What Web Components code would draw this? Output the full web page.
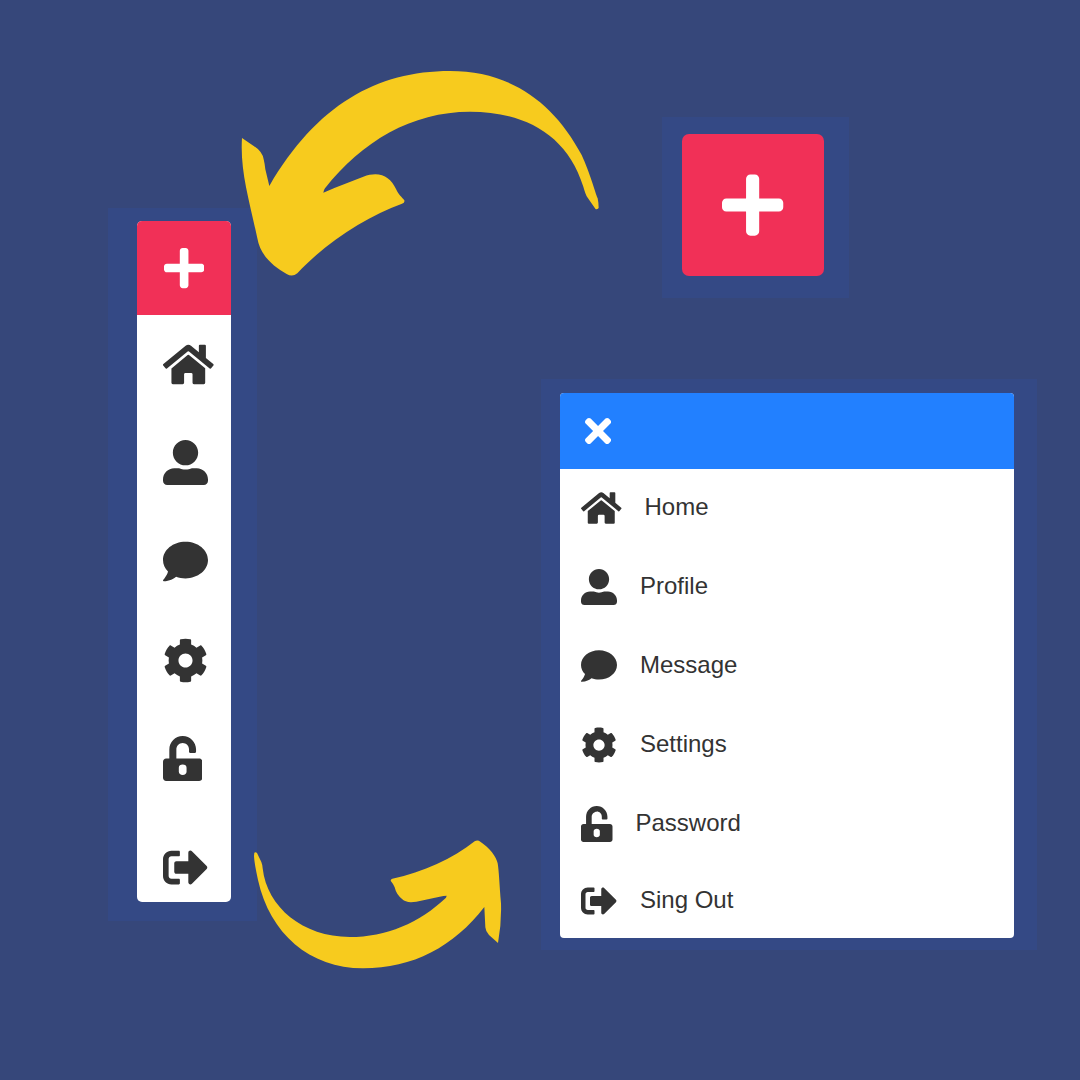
<!DOCTYPE html>
<html lang="en">
<head>
<meta charset="utf-8">
<meta name="viewport" content="width=device-width, initial-scale=1">
<title>Side menu</title>
<style>
  html, body { margin: 0; min-height: 100%; background: #36477a; }
  body { font-family: "Liberation Sans", Arial, sans-serif; color: #333; }
</style>
</head>
<body>
<menu-showcase>
  <menu-panel slot="rail" class="rail">
    <icon-rail></icon-rail>
  </menu-panel>
  <menu-panel slot="toggle" class="toggle">
    <menu-toggle></menu-toggle>
  </menu-panel>
  <menu-panel slot="menu" class="menu">
    <side-menu>
      <menu-item icon="home">Home</menu-item>
      <menu-item icon="user">Profile</menu-item>
      <menu-item icon="comment">Message</menu-item>
      <menu-item icon="cog">Settings</menu-item>
      <menu-item icon="unlock">Password</menu-item>
      <menu-item icon="exit" last>Sing Out</menu-item>
    </side-menu>
  </menu-panel>
</menu-showcase>

<script>
const ICONS = {
  plus: [448, 'M416 208H272V64c0-17.67-14.33-32-32-32h-32c-17.67 0-32 14.33-32 32v144H32c-17.67 0-32 14.33-32 32v32c0 17.67 14.33 32 32 32h144v144c0 17.67 14.33 32 32 32h32c17.67 0 32-14.33 32-32V304h144c17.67 0 32-14.33 32-32v-32c0-17.67-14.33-32-32-32z'],
  times: [352, 'M242.72 256l100.07-100.07c12.28-12.28 12.28-32.19 0-44.48l-22.24-22.24c-12.28-12.28-32.19-12.28-44.48 0L176 189.28 75.93 89.21c-12.28-12.28-32.19-12.28-44.48 0L9.21 111.45c-12.28 12.28-12.28 32.19 0 44.48L109.28 256 9.21 356.07c-12.28 12.28-12.28 32.19 0 44.48l22.24 22.24c12.28 12.28 32.2 12.28 44.48 0L176 322.72l100.07 100.07c12.28 12.28 32.2 12.28 44.48 0l22.24-22.24c12.28-12.28 12.28-32.19 0-44.48L242.72 256z'],
  home: [576, 'M280.37 148.26L96 300.11V464a16 16 0 0 0 16 16l112.06-.29a16 16 0 0 0 15.92-16V368a16 16 0 0 1 16-16h64a16 16 0 0 1 16 16v95.64a16 16 0 0 0 16 16.05L464 480a16 16 0 0 0 16-16V300L295.67 148.26a12.19 12.19 0 0 0-15.3 0zM571.6 251.47L488 182.56V44.05a12 12 0 0 0-12-12h-56a12 12 0 0 0-12 12v72.61L318.47 43a48 48 0 0 0-61 0L4.34 251.47a12 12 0 0 0-1.6 16.9l25.5 31A12 12 0 0 0 45.15 301l235.22-193.74a12.19 12.19 0 0 1 15.3 0L530.9 301a12 12 0 0 0 16.9-1.6l25.5-31a12 12 0 0 0-1.7-16.93z'],
  user: [512, 'M256 288c79.5 0 144-64.5 144-144S335.5 0 256 0 112 64.5 112 144s64.5 144 144 144zm128 32h-55.1c-22.2 10.2-46.9 16-72.9 16s-50.6-5.8-72.9-16H128C57.3 320 0 377.3 0 448v16c0 26.5 21.5 48 48 48h416c26.5 0 48-21.5 48-48v-16c0-70.7-57.3-128-128-128z'],
  comment: [512, 'M256 32C114.6 32 0 125.1 0 240c0 49.6 21.4 95 57 130.7C44.5 421.1 2.7 466 2.2 466.5c-2.2 2.3-2.8 5.7-1.5 8.7S4.8 480 8 480c66.3 0 116-31.8 140.6-51.4 32.7 12.3 69 19.4 107.4 19.4 141.4 0 256-93.1 256-208S397.4 32 256 32z'],
  cog: [512, 'M487.4 315.7l-42.6-24.6c4.3-23.2 4.3-47 0-70.2l42.6-24.6c4.9-2.8 7.1-8.6 5.5-14-11.1-35.6-30-67.8-54.7-94.6-3.8-4.1-10-5.1-14.8-2.3L380.8 110c-17.9-15.4-38.5-27.3-60.8-35.1V25.8c0-5.6-3.9-10.5-9.4-11.7-36.7-8.2-74.3-7.8-109.2 0-5.5 1.2-9.4 6.1-9.4 11.7V75c-22.2 7.9-42.8 19.8-60.8 35.1L88.7 85.5c-4.9-2.8-11-1.9-14.8 2.3-24.7 26.7-43.6 58.9-54.7 94.6-1.7 5.4.6 11.2 5.5 14L67.3 221c-4.3 23.2-4.3 47 0 70.2l-42.6 24.6c-4.9 2.8-7.1 8.6-5.5 14 11.1 35.6 30 67.8 54.7 94.6 3.8 4.1 10 5.1 14.8 2.3l42.6-24.6c17.9 15.4 38.5 27.3 60.8 35.1v49.2c0 5.6 3.9 10.5 9.4 11.7 36.7 8.2 74.3 7.8 109.2 0 5.5-1.2 9.4-6.1 9.4-11.7v-49.2c22.2-7.9 42.8-19.8 60.8-35.1l42.6 24.6c4.9 2.8 11 1.9 14.8-2.3 24.7-26.7 43.6-58.9 54.7-94.6 1.5-5.5-.7-11.3-5.6-14.1zM256 336c-44.1 0-80-35.9-80-80s35.9-80 80-80 80 35.9 80 80-35.9 80-80 80z'],
  unlock: [448, 'M400 256H152V152.9c0-39.6 31.7-72.5 71.3-72.9 40-.4 72.7 32.1 72.7 72v28c0 6.6 5.4 12 12 12h56c6.6 0 12-5.4 12-12v-28C376 68 307.5-.3 223.5 0 139.5.3 72 69.5 72 153.5V256H36c-20 0-36 16-36 36v184c0 20 16 36 36 36h376c20 0 36-16 36-36V292c0-20-16-36-36-36zM268 408c0 22.1-17.9 36-44 36s-44-13.900-44-36v-48c0-22.1 17.900-36 44-36s44 13.900 44 36v48z'],
  exit: [512, 'M497 273L329 441c-15 15-41 4.5-41-17v-96H152c-13.3 0-24-10.7-24-24v-96c0-13.3 10.7-24 24-24h136V88c0-21.4 25.9-32 41-17l168 168c9.3 9.4 9.3 24.6 0 34zM192 436v-40c0-6.6-5.4-12-12-12H96c-17.7 0-32-14.3-32-32V160c0-17.7 14.3-32 32-32h84c6.6 0 12-5.4 12-12V76c0-6.6-5.4-12-12-12H96c-53 0-96 43-96 96v192c0 53 43 96 96 96h84c6.6 0 12-5.4 12-12z']
};

class BaseElement extends HTMLElement {
  constructor() {
    super();
    this.attachShadow({ mode: 'open' });
  }
  connectedCallback() {
    this.shadowRoot.innerHTML = this.render();
  }
}

// Glyph whose height is --icon-size; the width follows its own proportions.
class GlyphIcon extends BaseElement {
  render() {
    const [width, path] = ICONS[this.getAttribute('name')];
    return `
      <style>
        :host { display: inline-flex; flex: none; height: var(--icon-size, 36px); }
        svg { height: 100%; width: auto; aspect-ratio: ${width} / 512; fill: currentColor; display: block; }
      </style>
      <svg viewBox="0 0 ${width} 512" aria-hidden="true"><path d="${path}"/></svg>`;
  }
}

class MenuPanel extends BaseElement {
  render() {
    return `
      <style>:host { display: block; box-sizing: border-box; background: #344985; }</style>
      <slot></slot>`;
  }
}

class MenuToggle extends BaseElement {
  render() {
    return `
      <style>
        :host { display: block; }
        button {
          display: flex; align-items: center; justify-content: center;
          width: 100%; aspect-ratio: 1; padding: 0; border: 0; border-radius: 7px;
          background: #f13057; color: #fff; cursor: pointer; --icon-size: 70px;
        }
      </style>
      <button type="button" aria-label="Open menu"><glyph-icon name="plus"></glyph-icon></button>`;
  }
}

class IconRail extends BaseElement {
  render() {
    const links = [['home', 'Home'], ['user', 'Profile'], ['comment', 'Message'],
                   ['cog', 'Settings'], ['unlock', 'Password'], ['exit', 'Sing Out']];
    return `
      <style>
        :host { display: block; border-radius: 5px; overflow: hidden; background: #fff; --icon-size: 45px; }
        button {
          display: flex; align-items: center; justify-content: center; width: 100%; height: 94px; padding: 0;
          border: 0; background: #f13057; color: #fff; cursor: pointer; --icon-size: 46px;
        }
        nav { display: grid; grid-template-rows: repeat(5, 1fr) 94px; height: 587px; }
        a { display: flex; align-items: center; padding-left: 26px; color: inherit; }
        a:last-child { padding-top: 26px; }
      </style>
      <button type="button" aria-label="Expand menu"><glyph-icon name="plus"></glyph-icon></button>
      <nav>${links.map(([icon, label]) =>
        `<a href="#${icon}" aria-label="${label}"><glyph-icon name="${icon}"></glyph-icon></a>`).join('')}</nav>`;
  }
}

class MenuItem extends BaseElement {
  render() {
    const icon = this.getAttribute('icon');
    return `
      <style>
        :host { display: block; height: 77px; padding-bottom: 2px; }
        :host([last]) { height: 74px; padding-bottom: 0; }
        a {
          display: flex; align-items: center; gap: 23px; height: 100%; padding-left: 21px;
          color: inherit; text-decoration: none; font-size: 24px; line-height: 32px;
        }
        span { padding-bottom: 2px; }
      </style>
      <a href="#${icon}"><glyph-icon name="${icon}"></glyph-icon><span><slot></slot></span></a>`;
  }
}

class SideMenu extends BaseElement {
  render() {
    return `
      <style>
        :host { display: block; border-radius: 4px; overflow: hidden; background: #fff; }
        header { display: flex; align-items: center; height: 76px; padding-left: 25px; background: #2280ff; }
        button { display: flex; padding: 0; border: 0; background: none; color: #fff; cursor: pointer; --icon-size: 38px; }
      </style>
      <header><button type="button" aria-label="Close menu"><glyph-icon name="times"></glyph-icon></button></header>
      <nav><slot></slot></nav>`;
  }
}

class BrushArrow extends BaseElement {
  render() {
    const back = this.getAttribute('kind') === 'back';
    return `
      <style>
        :host { display: block; }
        svg { display: block; width: 100%; fill: #f7cb1e; }
      </style>
      ${back
        ? `<svg viewBox="60 60 1080 621" aria-hidden="true"><path d="M66 264L100 287Q127 304 131 328Q134 340 136 358L148 408C290 165 470 63 690 63C870 63 1000 155 1085 315C1110 370 1125 425 1133 445Q1136 460 1136 474Q1130 480 1126 476L1102 442Q1096 432 1090 410C1040 250 910 185 750 185C575 185 425 275 315 415Q310 422 310 428L345 413L430 380C480 362 510 380 528 417C537 436 545 440 553 451Q555 458 546 461C440 500 320 575 232 670Q217 682 200 672C160 650 120 615 112 565C85 440 60 360 66 264Z"/></svg>`
        : `<svg viewBox="40 60 750 387" aria-hidden="true"><path d="M44 98Q48 95 52 99L65 126Q68 133 69 145C82 262 190 351 330 351C440 351 540 308 619 233L621 227Q612 227 600 230L530 245Q500 250 488 238Q470 224 465 202Q460 190 453 182Q453 177 458 176C550 158 640 115 705 64Q714 59 722 65C750 83 770 110 774 130C778 155 779 190 784 250Q786 310 775 369L748 345Q738 335 737 322L734 261C642 380 520 445 370 445C210 445 90 340 55 180Q44 130 43 108Z"/></svg>`}`;
  }
}

class MenuShowcase extends BaseElement {
  render() {
    return `
      <style>
        :host { display: block; position: relative; }
        main {
          display: grid; grid-template-columns: 149px minmax(0, 1fr); column-gap: 284px;
          align-items: start; padding: 117px 43px 130px 108px;
        }
        .left { padding-top: 91px; }
        .right { display: flex; flex-direction: column; gap: 81px; }
        ::slotted(.rail) { padding: 13px 26px 19px 29px; }
        ::slotted(.toggle) { width: 187px; margin-left: 121px; padding: 17px 25px 22px 20px; }
        ::slotted(.menu) { padding: 14px 23px 12px 19px; }
        brush-arrow { position: absolute; pointer-events: none; }
        .back { left: 240px; top: 70px; width: 360px; }
        .forth { left: 253px; top: 840px; width: 250px; }
      </style>
      <main>
        <div class="left"><slot name="rail"></slot></div>
        <div class="right"><slot name="toggle"></slot><slot name="menu"></slot></div>
      </main>
      <brush-arrow class="back" kind="back"></brush-arrow>
      <brush-arrow class="forth" kind="forth"></brush-arrow>`;
  }
}

customElements.define('glyph-icon', GlyphIcon);
customElements.define('menu-panel', MenuPanel);
customElements.define('menu-toggle', MenuToggle);
customElements.define('icon-rail', IconRail);
customElements.define('menu-item', MenuItem);
customElements.define('side-menu', SideMenu);
customElements.define('brush-arrow', BrushArrow);
customElements.define('menu-showcase', MenuShowcase);
</script>
</body>
</html>
